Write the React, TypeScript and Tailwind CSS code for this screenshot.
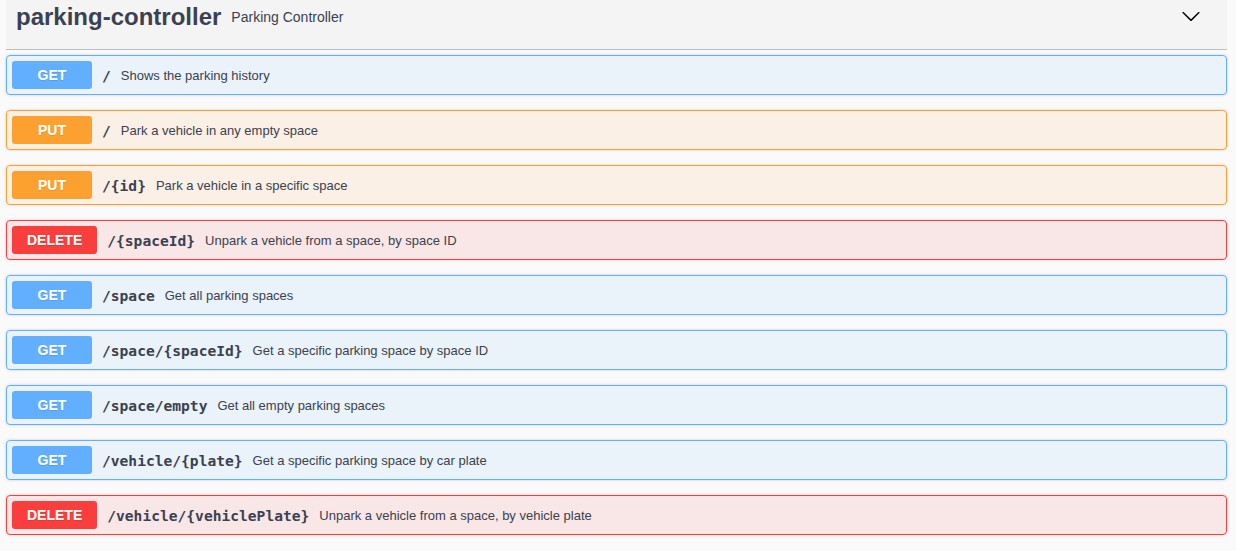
import React from 'react';

type Op = { method: 'GET' | 'PUT' | 'DELETE'; path: string; summary: string };

const ops: Op[] = [
  { method: 'GET', path: '/', summary: 'Shows the parking history' },
  { method: 'PUT', path: '/', summary: 'Park a vehicle in any empty space' },
  { method: 'PUT', path: '/{id}', summary: 'Park a vehicle in a specific space' },
  { method: 'DELETE', path: '/{spaceId}', summary: 'Unpark a vehicle from a space, by space ID' },
  { method: 'GET', path: '/space', summary: 'Get all parking spaces' },
  { method: 'GET', path: '/space/{spaceId}', summary: 'Get a specific parking space by space ID' },
  { method: 'GET', path: '/space/empty', summary: 'Get all empty parking spaces' },
  { method: 'GET', path: '/vehicle/{plate}', summary: 'Get a specific parking space by car plate' },
  { method: 'DELETE', path: '/vehicle/{vehiclePlate}', summary: 'Unpark a vehicle from a space, by vehicle plate' },
];

const styles = {
  GET: { block: 'bg-[#61affe]/10 border-[#61affe]', badge: 'bg-[#61affe]' },
  PUT: { block: 'bg-[#fca130]/10 border-[#fca130]', badge: 'bg-[#fca130]' },
  DELETE: { block: 'bg-[#f93e3e]/10 border-[#f93e3e]', badge: 'bg-[#f93e3e]' },
};

const App: React.FC = () => {
  return (
    <div className="min-h-screen bg-[#fafafa] pl-[6px] pr-[9px] font-['Liberation_Sans',Arial,sans-serif] text-[#3b4151]">
      {/* Tag header */}
      <div className="flex items-start h-[50px] bg-[#f4f4f4] border-b border-[#3b4151]/30 pl-[10px] pr-[26px] pt-[2px]">
        <h3 className="text-[24px] leading-[30px] font-bold">parking-controller</h3>
        <small className="flex-1 px-[10px] text-[14px] leading-[30px]">Parking Controller</small>
        <svg width="20" height="20" viewBox="0 0 20 20" className="mt-[4px] text-[#000]" fill="currentColor">
          <path d="M17.418 6.109c.272-.268.709-.268.979 0s.271.701 0 .969l-7.908 7.83c-.27.268-.707.268-.979 0l-7.908-7.83c-.27-.268-.27-.701 0-.969.271-.268.709-.268.979 0L10 13.25l7.418-7.141z" />
        </svg>
      </div>

      {/* Operations */}
      <div className="flex flex-col gap-[15px] mt-[5px] pb-[16px]">
        {ops.map((op, i) => (
          <div
            key={i}
            className={`flex items-center h-[40px] border rounded-[4px] shadow-[0_0_3px_rgba(0,0,0,0.19)] px-[5px] ${styles[op.method].block}`}
          >
            <span
              className={`min-w-[80px] h-[28px] px-[15px] flex items-center justify-center rounded-[3px] text-white text-[14px] font-bold [text-shadow:0_1px_0_rgba(0,0,0,0.1)] ${styles[op.method].badge}`}
            >
              {op.method}
            </span>
            <span className="px-[10px] pt-[2px] font-['DejaVu_Sans_Mono',monospace] font-bold text-[14.6px] text-[#3b4151]">
              {op.path}
            </span>
            <span className="pt-[2px] text-[13px] text-[#3b4151]">{op.summary}</span>
          </div>
        ))}
      </div>
    </div>
  );
};

export default App;
